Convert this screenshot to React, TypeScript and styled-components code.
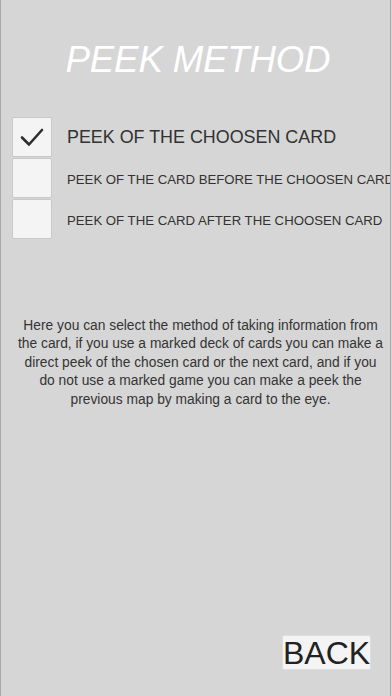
import styled, {createGlobalStyle} from "styled-components";

const options = [
    {label: "PEEK OF THE CHOOSEN CARD", checked: true, big: true},
    {label: "PEEK OF THE CARD BEFORE THE CHOOSEN CARD", checked: false, big: false},
    {label: "PEEK OF THE CARD AFTER THE CHOOSEN CARD", checked: false, big: false},
];

const GlobalStyle = createGlobalStyle`
    html, body {
        margin: 0;
        padding: 0;
        background: #d6d6d6;
        font-family: "Liberation Sans", Arial, sans-serif;
    }
`;

const Check = () => (
    <svg width="26" height="22" viewBox="0 0 26 22" fill="none">
        <path d="M3 11.5 L10 18.5 L23 4" stroke="#2e2e2e" strokeWidth="2.6" strokeLinecap="round" strokeLinejoin="round"/>
    </svg>
);

const App = () => {
    return (
        <>
            <GlobalStyle/>
            <Screen>
                <Title>PEEK METHOD</Title>
                <OptionList>
                    {
                        options.map((opt, index) => (
                            <OptionRow key={index}>
                                <CheckBox>{opt.checked && <Check/>}</CheckBox>
                                <OptionLabel big={opt.big}>{opt.label}</OptionLabel>
                            </OptionRow>
                        ))
                    }
                </OptionList>
                <Description>
                    Here you can select the method of taking information from the card, if you use a marked deck of
                    cards you can make a direct peek of the chosen card or the next card, and if you do not use a
                    marked game you can make a peek the previous map by making a card to the eye.
                </Description>
                <Footer>
                    <BackButton>BACK</BackButton>
                </Footer>
            </Screen>
        </>
    )
}

const Screen = styled.div`
    box-sizing: border-box;
    width: 391px;
    height: 696px;
    display: flex;
    flex-direction: column;
    overflow: hidden;
    background: #d6d6d6;
    border-left: 1px solid #a9a9a9;
    border-right: 1px solid #a9a9a9;
`;

const Title = styled.h1`
    margin: 39px 0 0 0;
    padding-left: 5px;
    text-align: center;
    font-size: 36.7px;
    line-height: 42px;
    font-weight: normal;
    font-style: italic;
    color: #ffffff;
    letter-spacing: -0.2px;
`;

const OptionList = styled.div`
    display: flex;
    flex-direction: column;
    gap: 1px;
    margin: 36px 0 0 11px;
`;

const OptionRow = styled.div`
    display: flex;
    align-items: center;
    gap: 15px;
    height: 40px;
`;

const CheckBox = styled.div`
    box-sizing: border-box;
    flex: 0 0 40px;
    height: 40px;
    display: flex;
    align-items: center;
    justify-content: center;
    background: #f4f4f4;
    border: 1px solid #c9c9c9;
    border-radius: 2px;
`;

const OptionLabel = styled.span<{ big: boolean }>`
    white-space: nowrap;
    color: #323232;
    font-size: ${({big}) => big ? "17.9px" : "13.2px"};
    margin-top: ${({big}) => big ? "0" : "2px"};
`;

const Description = styled.p`
    margin: 78px 0 0 0;
    padding: 0 4px 0 14px;
    text-align: center;
    font-size: 13.8px;
    line-height: 18.4px;
    color: #343434;
`;

const Footer = styled.div`
    margin-top: auto;
    display: flex;
    justify-content: flex-end;
    padding: 0 19px 26px 0;
`;

const BackButton = styled.button`
    width: 89px;
    height: 35px;
    padding: 0;
    border: 1px solid #dedede;
    border-radius: 2px;
    background: #f4f4f4;
    color: #222222;
    font-family: "Liberation Sans", Arial, sans-serif;
    font-size: 32px;
    line-height: 35px;
`;

export default App;
